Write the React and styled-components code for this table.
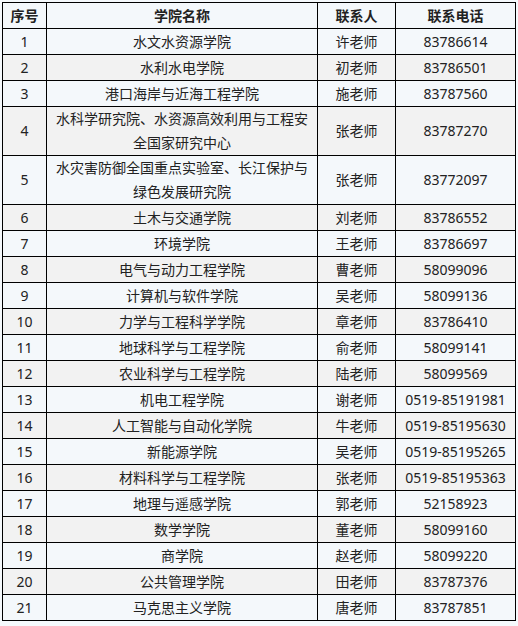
import React from "react";
import styled, { createGlobalStyle } from "styled-components";

const GlobalStyle = createGlobalStyle`
  html, body {
    margin: 0;
    padding: 0;
    background: #f5f9fc;
  }
  body {
    padding: 2px;
    font-family: "Noto Sans", "Noto Sans CJK SC", sans-serif;
    color: #222;
  }
`;

const Table = styled.table`
  width: 513px;
  table-layout: fixed;
  border-collapse: collapse;
  font-size: 14px;
  line-height: 24px;
`;

const HeadCell = styled.th`
  height: 25px;
  padding: 0 4px;
  border: 1px solid #000;
  background: #f4f8fb;
  font-weight: bold;
  text-align: center;
  white-space: nowrap;
`;

const Row = styled.tr`
  background: ${(p) => (p.$even ? "#f2f2f2" : "#f4f8fb")};
`;

const Cell = styled.td`
  height: 25px;
  padding: 0 ${(p) => (p.$wide ? "8px" : "4px")};
  border: 1px solid #000;
  text-align: center;
  vertical-align: middle;
`;

const rows = [
  ["水文水资源学院", "许老师", "83786614"],
  ["水利水电学院", "初老师", "83786501"],
  ["港口海岸与近海工程学院", "施老师", "83787560"],
  ["水科学研究院、水资源高效利用与工程安全国家研究中心", "张老师", "83787270"],
  ["水灾害防御全国重点实验室、长江保护与绿色发展研究院", "张老师", "83772097"],
  ["土木与交通学院", "刘老师", "83786552"],
  ["环境学院", "王老师", "83786697"],
  ["电气与动力工程学院", "曹老师", "58099096"],
  ["计算机与软件学院", "吴老师", "58099136"],
  ["力学与工程科学学院", "章老师", "83786410"],
  ["地球科学与工程学院", "俞老师", "58099141"],
  ["农业科学与工程学院", "陆老师", "58099569"],
  ["机电工程学院", "谢老师", "0519-85191981"],
  ["人工智能与自动化学院", "牛老师", "0519-85195630"],
  ["新能源学院", "吴老师", "0519-85195265"],
  ["材料科学与工程学院", "张老师", "0519-85195363"],
  ["地理与遥感学院", "郭老师", "52158923"],
  ["数学学院", "董老师", "58099160"],
  ["商学院", "赵老师", "58099220"],
  ["公共管理学院", "田老师", "83787376"],
  ["马克思主义学院", "唐老师", "83787851"],
];

export default function App() {
  return (
    <>
      <GlobalStyle />
      <Table>
        <colgroup>
          <col style={{ width: 44 }} />
          <col style={{ width: 271 }} />
          <col style={{ width: 78 }} />
          <col style={{ width: 120 }} />
        </colgroup>
        <thead>
          <tr>
            <HeadCell>序号</HeadCell>
            <HeadCell>学院名称</HeadCell>
            <HeadCell>联系人</HeadCell>
            <HeadCell>联系电话</HeadCell>
          </tr>
        </thead>
        <tbody>
          {rows.map(([name, person, phone], i) => (
            <Row key={i} $even={i % 2 === 1}>
              <Cell>{i + 1}</Cell>
              <Cell $wide>{name}</Cell>
              <Cell>{person}</Cell>
              <Cell>{phone}</Cell>
            </Row>
          ))}
        </tbody>
      </Table>
    </>
  );
}
